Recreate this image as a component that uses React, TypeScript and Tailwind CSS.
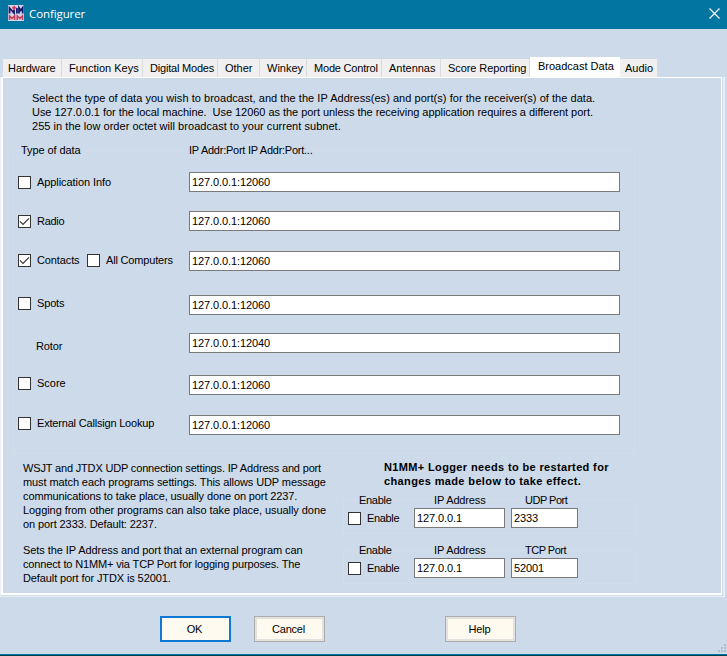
import React from 'react';

type Tab = { label: string; cls: string };

const tabsBefore: Tab[] = [
  { label: 'Hardware', cls: 'w-[59px] pl-[5px]' },
  { label: 'Function Keys', cls: 'w-[81px] pl-[7px]' },
  { label: 'Digital Modes', cls: 'w-[75px] pl-[7px] tracking-[-0.2px]' },
  { label: 'Other', cls: 'w-[42px] pl-[7px]' },
  { label: 'Winkey', cls: 'w-[47px] pl-[7px]' },
  { label: 'Mode Control', cls: 'w-[75px] pl-[7px] tracking-[-0.2px]' },
  { label: 'Antennas', cls: 'w-[59px] pl-[7px]' },
  { label: 'Score Reporting', cls: 'w-[89px] pl-[7px] tracking-[-0.08px]' },
];

type TextLine = { text: string; cls: string };

const introLines: TextLine[] = [
  { text: 'Select the type of data you wish to broadcast, and the the IP Address(es) and port(s) for the receiver(s) of the data.', cls: 'tracking-[0.038px]' },
  { text: 'Use 127.0.0.1 for the local machine.  Use 12060 as the port unless the receiving application requires a different port.', cls: 'tracking-[-0.043px]' },
  { text: '255 in the low order octet will broadcast to your current subnet.', cls: 'tracking-[0.038px]' },
];

const udpLines: TextLine[] = [
  { text: 'WSJT and JTDX UDP connection settings. IP Address and port', cls: 'tracking-[-0.165px]' },
  { text: 'must match each programs settings. This allows UDP message', cls: 'tracking-[-0.095px]' },
  { text: 'communications to take place, usually done on port 2237.', cls: 'tracking-[-0.115px]' },
  { text: 'Logging from other programs can also take place, usually done', cls: 'tracking-[-0.065px]' },
  { text: 'on port 2333. Default: 2237.', cls: 'tracking-[-0.09px]' },
];

const tcpLines: TextLine[] = [
  { text: 'Sets the IP Address and port that an external program can', cls: 'tracking-[-0.07px]' },
  { text: 'connect to N1MM+ via TCP Port for logging purposes. The', cls: 'tracking-[-0.145px]' },
  { text: 'Default port for JTDX is 52001.', cls: 'tracking-[-0.11px]' },
];

const restartLines: TextLine[] = [
  { text: 'N1MM+ Logger needs to be restarted for', cls: 'tracking-[0.36px]' },
  { text: 'changes made below to take effect.', cls: 'tracking-[0.37px]' },
];

function Lines({ lines, cls = '' }: { lines: TextLine[]; cls?: string }) {
  return (
    <div className={`whitespace-pre leading-[14px] ${cls}`}>
      {lines.map((l) => (
        <p key={l.text} className={l.cls}>{l.text}</p>
      ))}
    </div>
  );
}

function InactiveTab({ label, cls }: Tab) {
  return (
    <div className={`flex h-[18px] shrink-0 items-center whitespace-nowrap border-r border-[#d9dbde] bg-[#f0f0f0] ${cls}`}>
      {label}
    </div>
  );
}

function CheckBox({ checked = false }: { checked?: boolean }) {
  return (
    <span className="block h-[13px] w-[13px] shrink-0 border border-[#333] bg-white">
      {checked && (
        <svg width="11" height="11" viewBox="0 0 11 11" fill="none" stroke="#333" strokeWidth="1.2">
          <path d="M1 5.3 L4 8.3 L10 2.3" />
        </svg>
      )}
    </span>
  );
}

function Check({ label, checked, cls = '' }: { label: string; checked?: boolean; cls?: string }) {
  return (
    <div className="flex h-[13px] items-center gap-[6px] whitespace-nowrap">
      <CheckBox checked={checked} />
      <span className={`leading-[13px] ${cls}`}>{label}</span>
    </div>
  );
}

function Field({ value, cls }: { value: string; cls: string }) {
  return (
    <div className={`flex h-5 shrink-0 items-center border border-[#7a7a7a] bg-white pl-[2px] tracking-[-0.1px] ${cls}`}>{value}</div>
  );
}

function DataRow({ value, cls, labelCls, children }: { value: string; cls: string; labelCls: string; children: React.ReactNode }) {
  return (
    <div className={`flex items-start ${cls}`}>
      <div className={`flex w-[171px] shrink-0 ${labelCls}`}>{children}</div>
      <Field value={value} cls="w-[431px]" />
    </div>
  );
}

function PortGroup({ portLabel, port }: { portLabel: string; port: string }) {
  return (
    <div className="h-[34px] w-[293px] border border-[#d3ddea]">
      <div className="-mt-[8px] flex h-[14px] leading-[14px]">
        <span className="ml-[15px] w-[75px]"><span className="bg-[#cddaea] tracking-[-0.3px]">Enable</span></span>
        <span className="w-[91px]"><span className="bg-[#cddaea] tracking-[-0.15px]">IP Address</span></span>
        <span className="bg-[#cddaea] tracking-[-0.5px]">{portLabel}</span>
      </div>
      <div className="mt-[1px] flex pl-[4px]">
        <div className="w-[66px] pt-[4px]"><Check label="Enable" cls="-mt-px tracking-[-0.35px]" /></div>
        <Field value="127.0.0.1" cls="w-[91px]" />
        <Field value={port} cls="ml-[6px] w-[67px]" />
      </div>
    </div>
  );
}

function Button({ label, cls }: { label: string; cls: string }) {
  return (
    <button className={`flex h-[26px] w-[71px] items-center justify-center bg-[#fffaf0] pr-[2px] tracking-[-0.2px] ${cls}`}>{label}</button>
  );
}

function Logo() {
  return (
    <svg width="16" height="16" viewBox="0 0 16 16" className="shrink-0">
      <rect width="16" height="16" fill="#d3d3e4" />
      <g fill="none">
        <path stroke="#151c70" strokeWidth="1.8" d="M1.5 8.6V3L6 8V4.5M8.9 3V8.6M11 8.6V2.8L12.8 5.4L14.7 2.8V8.6" />
        <path stroke="#d9264a" strokeWidth="1.3" d="M4 2.8H8.4M6.2 0.8V4.8" />
        <path stroke="#c93a58" strokeWidth="1.5" d="M1.5 15V11L4 13.4L6.6 11V15M9.2 15V11L11.8 13.4L14.5 11V15" />
      </g>
    </svg>
  );
}

export default function App() {
  return (
    <div className="flex h-[656px] w-[727px] flex-col overflow-hidden bg-[#cddaea] font-['Liberation_Sans',Arial,sans-serif] text-[11px] text-black">
      <header className="flex h-[29px] shrink-0 items-center bg-[#0275a0] pl-[8px] pr-[7px] text-white">
        <div className="-mt-[3px]"><Logo /></div>
        <span className="-mt-[2px] ml-[5px] flex-1 font-['Open_Sans','Noto_Sans',sans-serif] text-[11.5px] tracking-[-0.1px]">Configurer</span>
        <svg width="11" height="11" viewBox="0 0 11 11" stroke="white" strokeWidth="1.2" className="-mt-[3px]">
          <path d="M0.5 0.5L10.5 10.5M10.5 0.5L0.5 10.5" />
        </svg>
      </header>

      <nav className="mt-[28px] flex h-5 shrink-0 items-end pl-[3px]">
        {tabsBefore.map((t) => (
          <InactiveTab key={t.label} label={t.label} cls={t.cls} />
        ))}
        <div className="flex h-5 w-[90px] shrink-0 items-center bg-white pb-[2px] pl-[8px]">Broadcast Data</div>
        <InactiveTab label="Audio" cls="w-[38px] pl-[5px]" />
      </nav>

      <div className="h-[520px] w-[725px] shrink-0 border-b border-l border-r-2 border-[#e9eef5] pb-px pr-px">
        <main className="flex h-full flex-col border-2 border-t border-r-[1px] border-white">
          <Lines lines={introLines} cls="mt-[13px] h-[42px] pl-[29px]" />

          <section className="ml-[10px] mt-[17px] h-[304px] w-[622px] border border-[#d3ddea]">
            <div className="-mt-[8px] flex h-[14px] pl-[7px] leading-[14px]">
              <span className="w-[168px]"><span className="bg-[#cddaea] tracking-[-0.08px]">Type of data</span></span>
              <span className="bg-[#cddaea] tracking-[-0.25px]">IP Addr:Port IP Addr:Port...</span>
            </div>
            <div className="mt-[15px] pl-[4px]">
              <DataRow value="127.0.0.1:12060" cls="h-[39px]" labelCls="pt-[4px]"><Check label="Application Info" cls="tracking-[-0.07px]" /></DataRow>
              <DataRow value="127.0.0.1:12060" cls="h-[40px]" labelCls="pt-[4px]"><Check label="Radio" checked cls="tracking-[-0.3px]" /></DataRow>
              <DataRow value="127.0.0.1:12060" cls="h-[44px]" labelCls="pt-[3px]">
                <div className="w-[69px]"><Check label="Contacts" checked cls="tracking-[-0.12px]" /></div>
                <Check label="All Computers" cls="tracking-[-0.17px]" />
              </DataRow>
              <DataRow value="127.0.0.1:12060" cls="h-[38px]" labelCls="pt-[2px]"><Check label="Spots" cls="tracking-[-0.15px]" /></DataRow>
              <DataRow value="127.0.0.1:12040" cls="h-[42px]" labelCls="pl-[18px] pt-[6px] leading-[14px] tracking-[-0.15px]">Rotor</DataRow>
              <DataRow value="127.0.0.1:12060" cls="h-[40px]" labelCls="pt-[2px]"><Check label="Score" /></DataRow>
              <DataRow value="127.0.0.1:12060" cls="h-5" labelCls="pt-[2px]"><Check label="External Callsign Lookup" cls="tracking-[-0.19px]" /></DataRow>
            </div>
          </section>

          <section className="flex pl-[20px] pt-[7px]">
            <div className="w-[320px]">
              <Lines lines={udpLines} />
              <Lines lines={tcpLines} cls="mt-[12px]" />
            </div>
            <div className="-mt-px">
              <Lines lines={restartLines} cls="pl-[41px] font-bold" />
              <div className="mt-[12px] flex flex-col gap-[16px]">
                <PortGroup portLabel="UDP Port" port="2333" />
                <PortGroup portLabel="TCP Port" port="52001" />
              </div>
            </div>
          </section>
        </main>
      </div>

      <footer className="mt-[19px] flex h-[38px] shrink-0 pl-[160px]">
        <Button label="OK" cls="border-2 border-[#0f78d4]" />
        <Button label="Cancel" cls="ml-[23px] border border-[#adadad] shadow-[inset_0_0_0_2px_#e3e1de]" />
        <Button label="Help" cls="ml-[120px] border border-[#adadad] shadow-[inset_0_0_0_2px_#e3e1de]" />
        <svg width="9" height="9" viewBox="0 0 9 9" fill="#b4bcc6" className="ml-auto mt-[28px]">
          <path d="M6 0h2v2h-2zM3 3h2v2h-2zM6 3h2v2h-2zM0 6h2v2h-2zM3 6h2v2h-2zM6 6h2v2h-2z" />
        </svg>
      </footer>
      <div className="h-[2px] shrink-0 border-t border-[#0275a0] bg-[#043c50]" />
    </div>
  );
}
